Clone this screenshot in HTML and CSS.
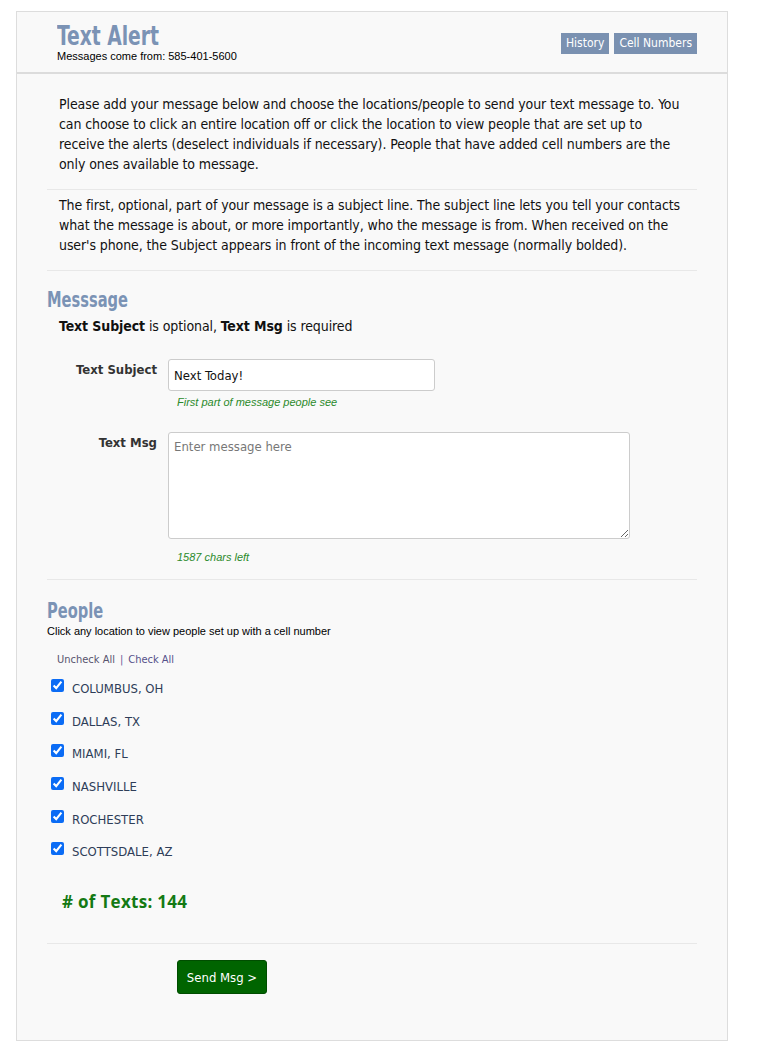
FILE: index.html
```html
<!DOCTYPE html>
<html>
<head>
<meta charset="utf-8">
<link rel="stylesheet" href="styles.css">
</head>
<body>
<div class="panel">
  <header class="head">
    <div class="brand">
      <h1 class="title">Text Alert</h1>
      <div class="from">Messages come from: 585-401-5600</div>
    </div>
    <nav class="navbtns">
      <a class="nbtn">History</a>
      <a class="nbtn">Cell Numbers</a>
    </nav>
  </header>
  <div class="body">
    <p class="intro">Please add your message below and choose the locations/people to send your text message to. You can choose to click an entire location off or click the location to view people that are set up to receive the alerts (deselect individuals if necessary). People that have added cell numbers are the only ones available to message.</p>
    <p class="intro second">The first, optional, part of your message is a subject line. The subject line lets you tell your contacts what the message is about, or more importantly, who the message is from. When received on the user's phone, the Subject appears in front of the incoming text message (normally bolded).</p>

    <section class="sec msg">
      <h2 class="sectitle">Messsage</h2>
      <p class="req"><b>Text Subject</b> is optional, <b>Text Msg</b> is required</p>
      <div class="frow">
        <label class="flabel">Text Subject</label>
        <div class="fctrl">
          <input class="subj" type="text" value="Next Today!">
          <div class="hint">First part of message people see</div>
        </div>
      </div>
      <div class="frow r2">
        <label class="flabel">Text Msg</label>
        <div class="fctrl">
          <textarea class="tmsg" placeholder="Enter message here"></textarea>
          <div class="hint">1587 chars left</div>
        </div>
      </div>
    </section>

    <section class="sec people">
      <h2 class="sectitle">People</h2>
      <div class="psub">Click any location to view people set up with a cell number</div>
      <div class="checks"><a>Uncheck All</a><span class="sep">|</span><a>Check All</a></div>
      <ul class="locs">
        <li><input type="checkbox" checked><span>COLUMBUS, OH</span></li>
        <li><input type="checkbox" checked><span>DALLAS, TX</span></li>
        <li><input type="checkbox" checked><span>MIAMI, FL</span></li>
        <li><input type="checkbox" checked><span>NASHVILLE</span></li>
        <li><input type="checkbox" checked><span>ROCHESTER</span></li>
        <li><input type="checkbox" checked><span>SCOTTSDALE, AZ</span></li>
      </ul>
      <div class="count"># of Texts: 144</div>
    </section>

    <div class="actions">
      <button class="send">Send Msg &gt;</button>
    </div>
  </div>
</div>
</body>
</html>
```

FILE: styles.css
```css
html, body { margin: 0; padding: 0; background: #fff; }
body {
  padding: 11px 31px 21px 16px;
  font-family: "DejaVu Sans Condensed", "DejaVu Sans", sans-serif;
  color: #222;
}
.panel {
  background: #f9f9f9;
  border: 1px solid #ddd;
  box-sizing: border-box;
  width: 712px;
  height: 1030px;
}
.head {
  display: flex;
  justify-content: space-between;
  align-items: flex-start;
  padding: 10px 30px 7px 40px;
  border-bottom: 2px solid #dcdcdc;
  height: 62px;
  box-sizing: border-box;
}
.title {
  margin: 0;
  font-weight: bold;
  font-size: 26px;
  line-height: 28px;
  color: #7b93b5;
  transform: scaleX(0.8);
  transform-origin: left center;
  white-space: nowrap;
  width: 101px;
}
.from {
  font-family: "Liberation Sans", Arial, sans-serif;
  font-size: 11px;
  line-height: 13px;
  color: #000;
}
.navbtns { display: flex; gap: 5px; margin-top: 11px; }
.nbtn {
  background: #7a91b1;
  color: #fff;
  font-size: 12px;
  line-height: 21px;
  height: 21px;
  padding: 0 5px;
}
.body { padding: 12px 30px 0 30px; }
.intro {
  margin: 0;
  padding: 8px 12px 15px 12px;
  font-size: 14px;
  letter-spacing: -0.1px;
  line-height: 20px;
  color: #111;
  border-bottom: 1px solid #e8e8e8;
}
.intro.second { padding-top: 5px; padding-bottom: 15px; }
.sec { border-bottom: 1px solid #e8e8e8; }
.sectitle {
  margin: 0;
  font-size: 22px;
  line-height: 24px;
  font-weight: bold;
  color: #7b93b5;
  transform: scaleX(0.74);
  transform-origin: left center;
  white-space: nowrap;
}
.msg { padding-top: 17px; padding-bottom: 15px; }
.req { margin: 5px 0 0 12px; font-size: 14px; letter-spacing: -0.1px; line-height: 18px; color: #111; }
.req b { font-weight: bold; }
.frow { display: flex; gap: 11px; margin-top: 24px; }
.frow.r2 { margin-top: 23px; }
.flabel {
  width: 110px;
  text-align: right;
  font-weight: bold;
  font-size: 13px;
  line-height: 20px;
  color: #333;
  padding-top: 1px;
}
.fctrl { display: flex; flex-direction: column; }
.subj {
  width: 267px;
  height: 32px;
  box-sizing: border-box;
  border: 1px solid #ccc;
  border-radius: 3px;
  padding: 0 5px;
  font-family: inherit;
  font-size: 13px;
  color: #111;
  background: #fff;
}
.tmsg {
  width: 462px;
  height: 107px;
  box-sizing: border-box;
  border: 1px solid #ccc;
  border-radius: 3px;
  padding: 6px 5px;
  font-family: inherit;
  font-size: 13px;
  background: #fff;
  margin: 0;
  resize: both;
}
.tmsg::placeholder { color: #777; }
.hint {
  font-family: "Liberation Sans", Arial, sans-serif;
  font-style: italic;
  font-size: 11px;
  line-height: 13px;
  color: #2b8a2b;
  margin: 5px 0 0 9px;
}
.r2 .hint { margin-top: 12px; }
.people { padding-top: 19px; padding-bottom: 30px; }
.psub {
  font-family: "Liberation Sans", Arial, sans-serif;
  font-size: 11px;
  line-height: 14px;
  color: #000;
  margin-top: 1px;
}
.checks { margin: 15px 0 0 10px; font-size: 11px; line-height: 14px; color: #58536e; }
.checks a:last-child { color: #55508a; }
.checks .sep { margin: 0 5px; color: #6a5a9a; }
.locs { list-style: none; margin: 5px 0 0 4px; padding: 0; }
.locs li { display: flex; align-items: center; height: 32.7px; }
.locs input { margin: 0 8px 0 0; width: 13px; height: 13px; accent-color: #0b6cf5; position: relative; top: -3px; }
.locs span { font-size: 13px; color: #2e3d58; }
.count {
  margin: 22px 0 0 15px;
  font-family: "Open Sans", sans-serif;
  font-weight: bold;
  font-size: 17px;
  letter-spacing: 0.3px;
  color: #147a14;
}
.actions { padding: 16px 0 0 130px; }
.send {
  background: #006400;
  color: #fff;
  border: 1px solid #004d00;
  border-radius: 3px;
  width: 90px;
  height: 34px;
  font-family: inherit;
  font-size: 13px;
  padding: 0;
}
```
